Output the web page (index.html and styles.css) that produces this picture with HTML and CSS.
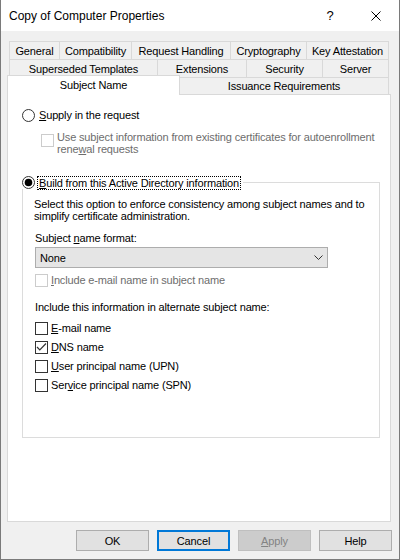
FILE: index.html
```html
<!DOCTYPE html>
<html>
<head>
<meta charset="utf-8">
<link rel="stylesheet" href="styles.css">
</head>
<body>
<div class="window">
  <div class="titlebar">
    <span class="title">Copy of Computer Properties</span>
    <span class="tb-btn help">?</span>
    <span class="tb-btn close"><svg width="10" height="10" viewBox="0 0 10 10"><path d="M0.5 0.5 L9.5 9.5 M9.5 0.5 L0.5 9.5" stroke="#000" stroke-width="1" fill="none"/></svg></span>
  </div>
  <div class="content">
    <div class="tabs">
      <div class="tabrow">
        <div class="tab w-general">General</div>
        <div class="tab w-compat">Compatibility</div>
        <div class="tab w-request">Request Handling</div>
        <div class="tab w-crypto">Cryptography</div>
        <div class="tab w-key">Key Attestation</div>
      </div>
      <div class="tabrow">
        <div class="tab w-super">Superseded Templates</div>
        <div class="tab w-ext">Extensions</div>
        <div class="tab w-sec">Security</div>
        <div class="tab w-server">Server</div>
      </div>
      <div class="tabrow row3">
        <div class="tab sel">Subject Name</div>
        <div class="tab iss">Issuance Requirements</div>
      </div>
    </div>
    <div class="panel">
      <div class="opt">
        <svg class="radio" viewBox="0 0 13 13"><circle cx="6.5" cy="6.5" r="6" fill="#fff" stroke="#333"/></svg>
        <span><u>S</u>upply in the request</span>
      </div>
      <div class="sub">
        <svg class="cb sub-cb" viewBox="0 0 13 13"><rect x="0.5" y="0.5" width="12" height="12" fill="#fff" stroke="#cccccc"/></svg>
        <span>Use subject information from existing certificates for autoenrollment<br>rene<u>w</u>al requests</span>
      </div>
      <fieldset class="group">
        <legend class="legend">
          <div class="legend-row">
            <svg class="radio radio-l" viewBox="0 0 13 13"><circle cx="6.5" cy="6.5" r="6" fill="#fff" stroke="#333"/><circle cx="6.5" cy="6.5" r="3.8" fill="#000"/></svg>
            <span class="focus"><u>B</u>uild from this Active Directory information</span>
          </div>
        </legend>
        <div class="fs-inner">
          <div class="desc">Select this option to enforce consistency among subject names and to<br>simplify certificate administration.</div>
          <div class="label">Subject <u>n</u>ame format:</div>
          <div class="select">
            <span>None</span>
            <svg width="9" height="5" viewBox="0 0 9 5"><polyline points="0.5,0.5 4.5,4.5 8.5,0.5" fill="none" stroke="#333" stroke-width="1"/></svg>
          </div>
          <div class="cb-row disabled">
            <svg class="cb" viewBox="0 0 13 13"><rect x="0.5" y="0.5" width="12" height="12" fill="#fff" stroke="#cccccc"/></svg>
            <span><u>I</u>nclude e-mail name in subject name</span>
          </div>
          <div class="alt-label">Include this information in alternate subject name:</div>
          <div class="cb-row first">
            <svg class="cb" viewBox="0 0 13 13"><rect x="0.5" y="0.5" width="12" height="12" fill="#fff" stroke="#333"/></svg>
            <span><u>E</u>-mail name</span>
          </div>
          <div class="cb-row">
            <svg class="cb" viewBox="0 0 13 13"><rect x="0.5" y="0.5" width="12" height="12" fill="#fff" stroke="#333"/><polyline points="2,6 4.8,9 11,2.5" fill="none" stroke="#333" stroke-width="1.2"/></svg>
            <span><u>D</u>NS name</span>
          </div>
          <div class="cb-row">
            <svg class="cb" viewBox="0 0 13 13"><rect x="0.5" y="0.5" width="12" height="12" fill="#fff" stroke="#333"/></svg>
            <span><u>U</u>ser principal name (UPN)</span>
          </div>
          <div class="cb-row">
            <svg class="cb" viewBox="0 0 13 13"><rect x="0.5" y="0.5" width="12" height="12" fill="#fff" stroke="#333"/></svg>
            <span>Ser<u>v</u>ice principal name (SPN)</span>
          </div>
        </div>
      </fieldset>
    </div>
    <div class="buttons">
      <div class="btn">OK</div>
      <div class="btn default">Cancel</div>
      <div class="btn disabled-btn"><span><u>A</u>pply</span></div>
      <div class="btn">Help</div>
    </div>
  </div>
</div>
</body>
</html>
```

FILE: styles.css
```css
html, body {
  margin: 0;
  padding: 0;
}
body {
  width: 400px;
  height: 560px;
  overflow: hidden;
  font-family: "Liberation Sans", Arial, sans-serif;
  font-size: 11px;
  letter-spacing: -0.15px;
  color: #000;
}
.window {
  width: 400px;
  height: 560px;
  box-sizing: border-box;
  border: 1px solid #7a7a7a;
  border-top: none;
  background: #f0f0f0;
  display: flex;
  flex-direction: column;
}
.titlebar {
  height: 31px;
  flex: none;
  background: #fff;
  display: flex;
  align-items: center;
}
.title {
  flex: 1;
  padding-left: 8px;
  font-size: 12px;
  letter-spacing: 0;
}
.tb-btn {
  width: 46px;
  height: 31px;
  display: flex;
  align-items: center;
  justify-content: center;
}
.help {
  font-size: 13px;
  letter-spacing: 0;
}
.close svg {
  display: block;
}
.content {
  padding: 10px 0 0 6px;
}
.tabrow {
  display: flex;
  height: 18px;
  width: 380px;
  margin-left: 2px;
}
.tab {
  box-sizing: border-box;
  border-top: 1px solid #d9d9d9;
  border-left: 1px solid #d9d9d9;
  display: flex;
  align-items: center;
  justify-content: center;
  white-space: nowrap;
  flex: none;
}
.tab:last-child {
  border-right: 1px solid #d9d9d9;
}
.w-general { width: 50px; }
.w-compat { width: 72px; }
.w-request { width: 99px; }
.w-crypto { width: 76px; }
.w-key { width: 83px; }
.w-super { width: 148px; }
.w-ext { width: 89px; }
.w-sec { width: 76px; }
.w-server { width: 67px; }
.row3 {
  width: 382px;
  margin-left: 0;
  margin-top: -2px;
  height: 19px;
  align-items: flex-end;
  position: relative;
  z-index: 1;
}
.tab.sel {
  width: 173px;
  height: 20px;
  margin-bottom: -1px;
  background: #fff;
  border-right: 1px solid #d9d9d9;
  padding-bottom: 2px;
}
.tab.iss {
  width: 209px;
  height: 17px;
  border-left: none;
}
.panel {
  width: 384px;
  height: 428px;
  box-sizing: border-box;
  border: 1px solid #d9d9d9;
  background: #fff;
  padding: 14px 0 0 14px;
}
.opt {
  display: flex;
  align-items: center;
  height: 13px;
  line-height: 13px;
}
.radio {
  width: 13px;
  height: 13px;
  flex: none;
  margin-right: 4px;
  display: block;
}
.sub {
  display: flex;
  align-items: flex-start;
  margin: 9px 0 0 19px;
  color: #6d6d6d;
  line-height: 12px;
}
.cb {
  width: 13px;
  height: 13px;
  flex: none;
  margin-right: 3px;
  display: block;
}
.sub-cb {
  margin-top: 3px;
}
.group {
  margin: 21px 0 0 0;
  padding: 0;
  width: 358px;
  box-sizing: border-box;
  border: 1px solid #dcdcdc;
  min-width: 0;
}
.legend {
  padding: 0 3px 0 0;
  margin-left: -1px;
}
.legend-row {
  display: flex;
  align-items: flex-start;
  height: 13px;
}
.radio-l {
  margin-right: 3px;
}
.focus {
  outline: 1px dotted #000;
  padding: 0 1px;
  height: 12px;
  line-height: 12px;
  margin-top: 1px;
}
.fs-inner {
  padding: 9px 0 45px 12px;
}
.desc {
  line-height: 12px;
  margin-left: -1px;
}
.label {
  margin-top: 10px;
  line-height: 12px;
}
.select {
  margin-top: 3px;
  width: 293px;
  height: 21px;
  box-sizing: border-box;
  border: 1px solid #adadad;
  background: #e5e5e5;
  display: flex;
  align-items: center;
  justify-content: space-between;
  padding: 0 4px 0 4px;
}
.select svg {
  display: block;
}
.cb-row {
  display: flex;
  align-items: center;
  height: 13px;
  line-height: 13px;
  margin-top: 6px;
}
.cb-row.first {
  margin-top: 8px;
}
.disabled {
  color: #6d6d6d;
}
.alt-label {
  margin-top: 14px;
  line-height: 13px;
}
.buttons {
  display: flex;
  justify-content: flex-end;
  gap: 8px;
  margin-top: 8px;
  padding-right: 7px;
}
.btn {
  width: 73px;
  height: 21px;
  box-sizing: border-box;
  border: 1px solid #adadad;
  background: #e1e1e1;
  display: flex;
  align-items: center;
  justify-content: center;
}
.btn.default {
  border: 2px solid #0078d7;
}
.btn.disabled-btn {
  background: #cccccc;
  border-color: #bfbfbf;
  color: #838383;
}
```
